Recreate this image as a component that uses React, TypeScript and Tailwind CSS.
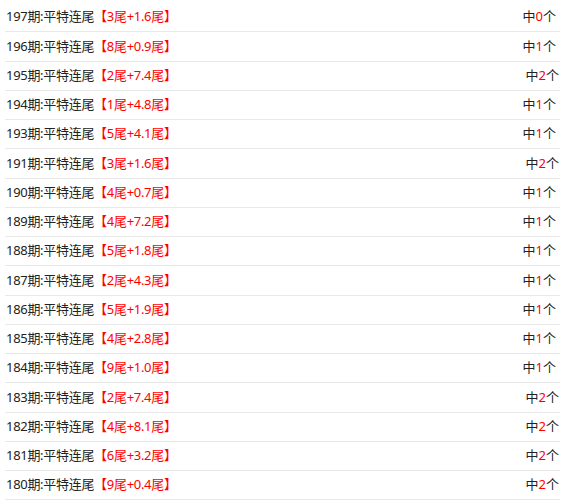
const rows = [
  { no: 197, a: "3", b: "1.6", hit: "0" },
  { no: 196, a: "8", b: "0.9", hit: "1" },
  { no: 195, a: "2", b: "7.4", hit: "2" },
  { no: 194, a: "1", b: "4.8", hit: "1" },
  { no: 193, a: "5", b: "4.1", hit: "1" },
  { no: 191, a: "3", b: "1.6", hit: "2" },
  { no: 190, a: "4", b: "0.7", hit: "1" },
  { no: 189, a: "4", b: "7.2", hit: "1" },
  { no: 188, a: "5", b: "1.8", hit: "1" },
  { no: 187, a: "2", b: "4.3", hit: "1" },
  { no: 186, a: "5", b: "1.9", hit: "1" },
  { no: 185, a: "4", b: "2.8", hit: "1" },
  { no: 184, a: "9", b: "1.0", hit: "1" },
  { no: 183, a: "2", b: "7.4", hit: "2" },
  { no: 182, a: "4", b: "8.1", hit: "2" },
  { no: 181, a: "6", b: "3.2", hit: "2" },
  { no: 180, a: "9", b: "0.4", hit: "2" },
];

export default function App() {
  return (
    <div
      className="w-[569px] h-[500px] overflow-hidden bg-white pt-[3px] pl-[5px] text-[13px] text-[#222]"
      style={{ fontFamily: '"Noto Sans", "Noto Sans CJK SC", sans-serif' }}
    >
      {rows.map((r) => (
        <div
          key={r.no}
          className="w-[555px] h-[29.25px] flex items-center justify-between border-b border-[#e8e8e8] pl-px"
        >
          <span className="tracking-[-0.3px]">
            {r.no}期:平特连尾
            <span className="text-[#ff0000]">
              【{r.a}尾+{r.b}尾】
            </span>
          </span>
          <span className={r.hit === "2" ? "pr-px" : "pr-[4px]"}>
            中<span className="text-[#ff0000]">{r.hit}</span>个
          </span>
        </div>
      ))}
    </div>
  );
}
